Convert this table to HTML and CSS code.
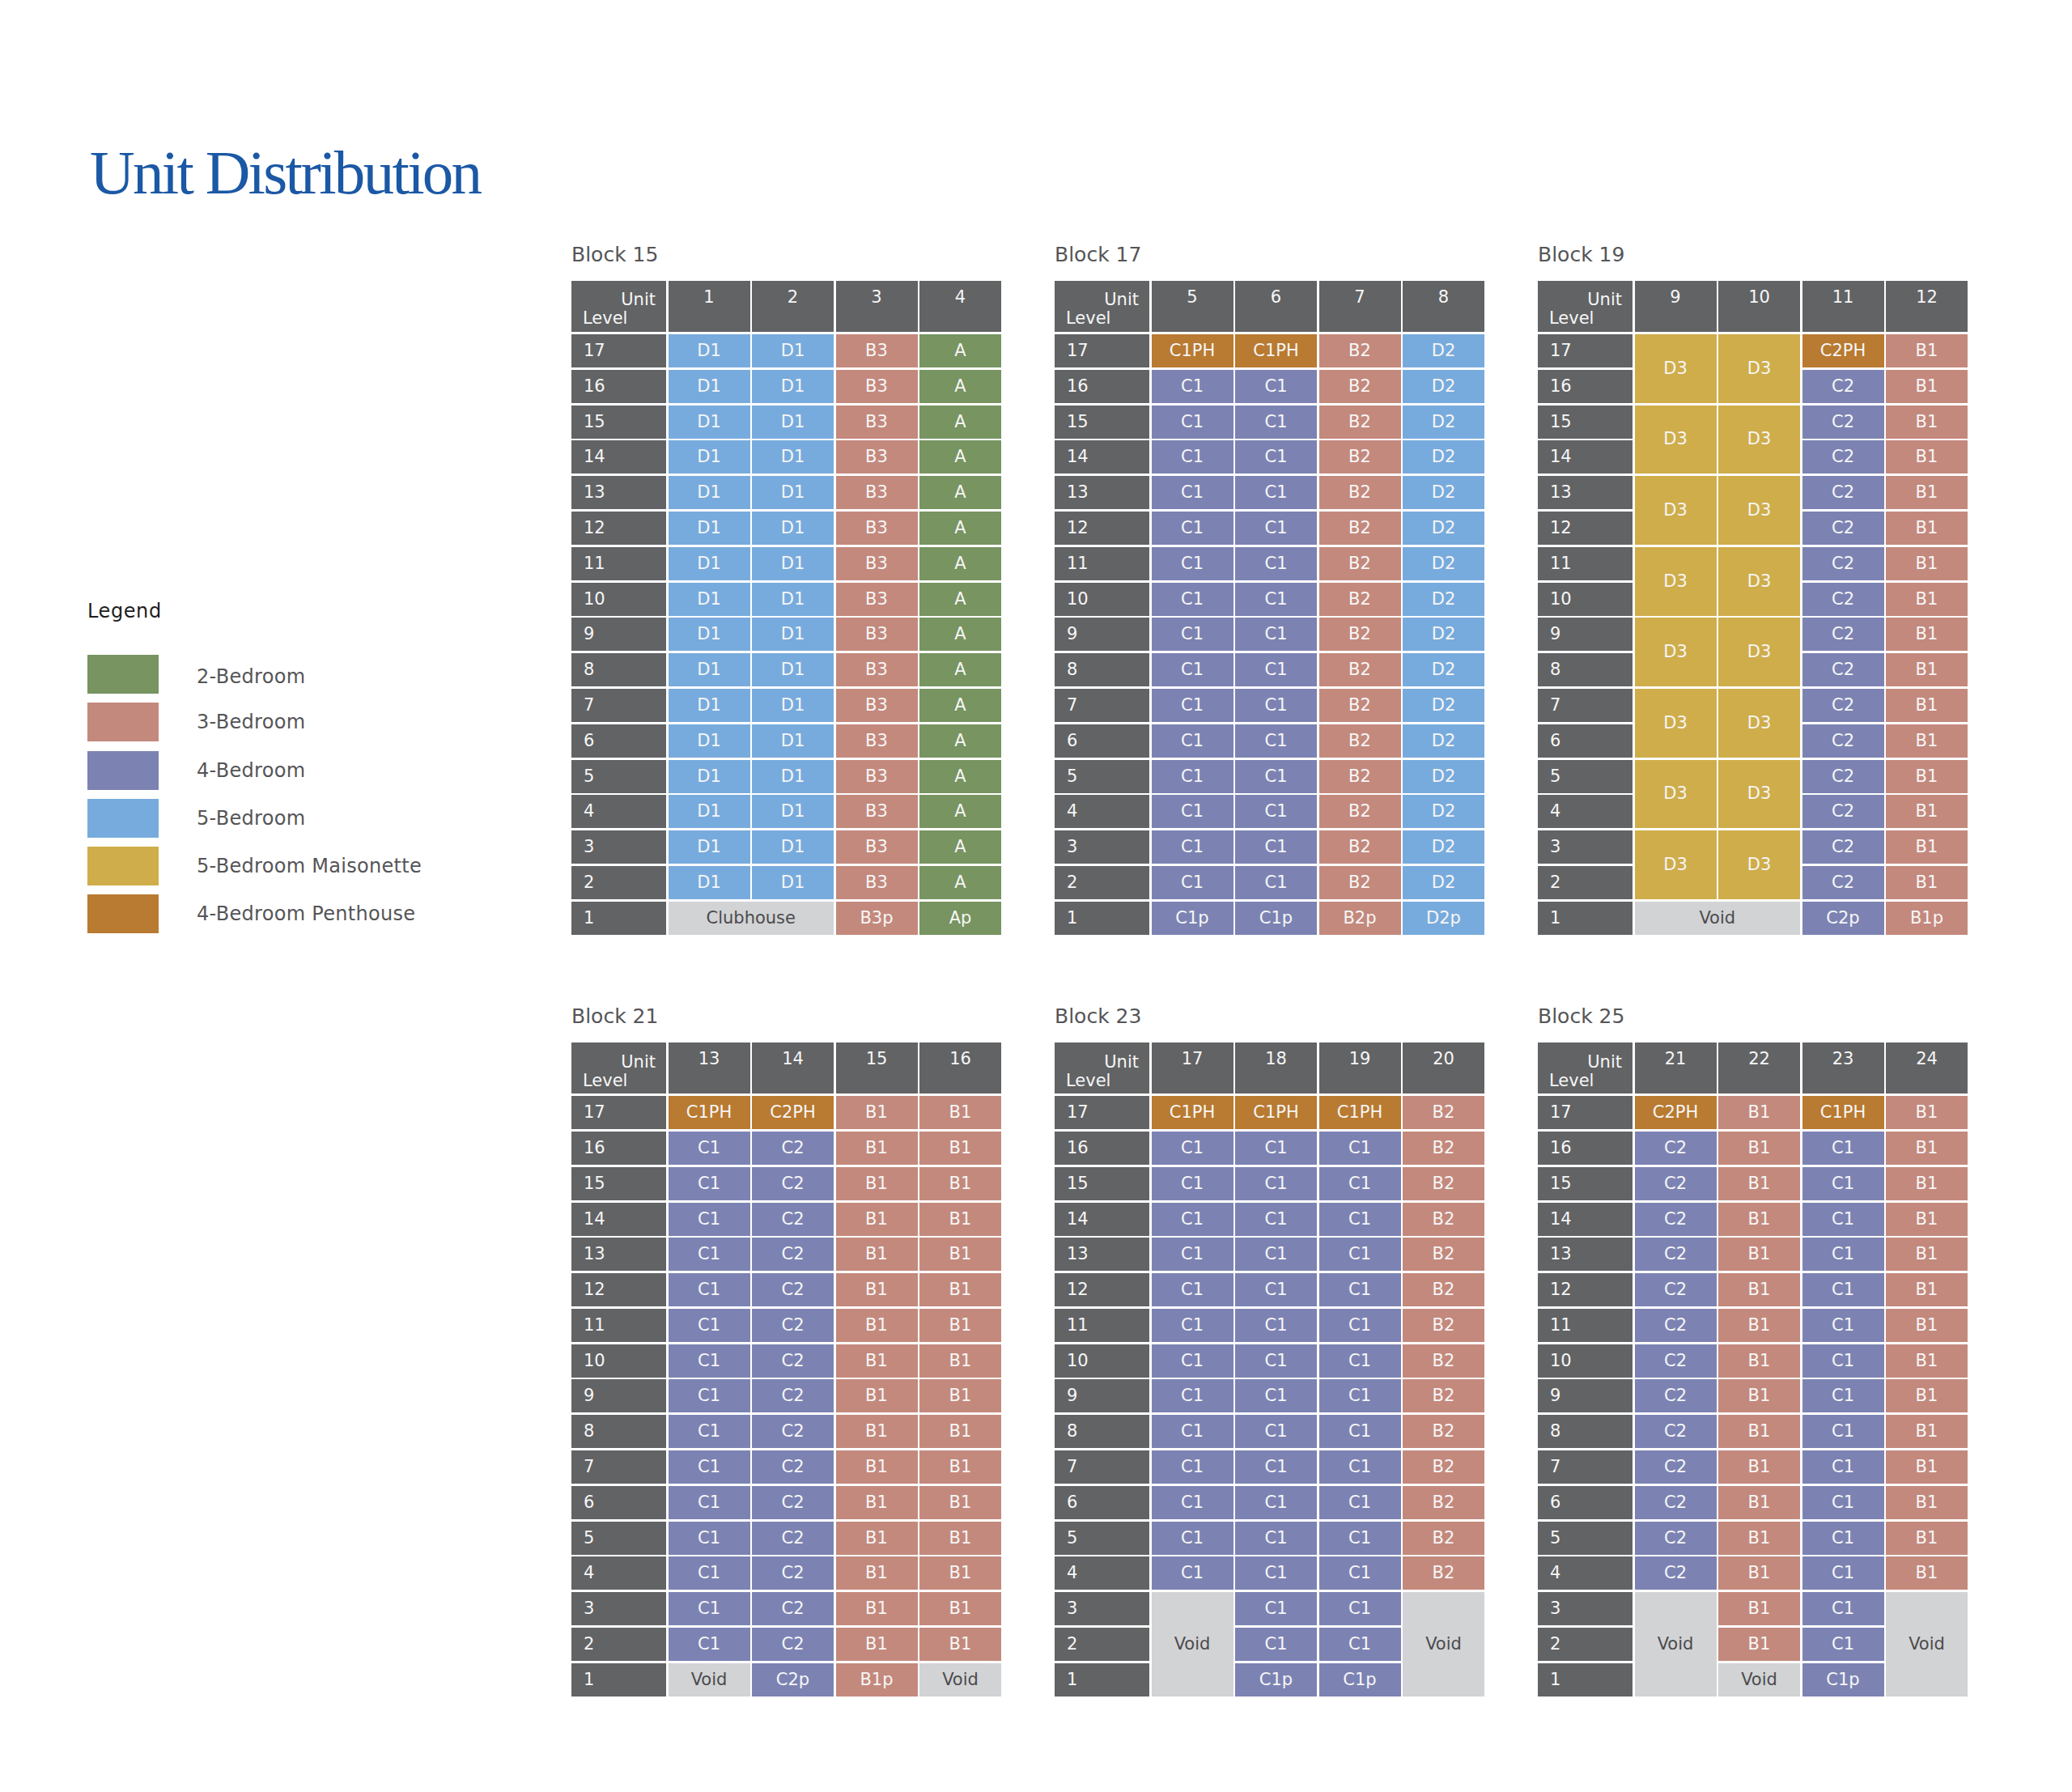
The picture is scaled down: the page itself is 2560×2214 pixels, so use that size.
FILE: index.html
```html
<!DOCTYPE html>
<html lang="en">
<head>
<meta charset="utf-8">
<title>Unit Distribution</title>
<link rel="stylesheet" href="styles.css">
</head>
<body>
<div class="page">
  <h1 class="title">Unit Distribution</h1>
  <div class="content">
    <aside class="legend">
      <div class="legend-title">Legend</div>
      <ul class="legend-list">
        <li class="legend-item"><span class="sw a"></span><span class="legend-label">2-Bedroom</span></li>
        <li class="legend-item"><span class="sw b"></span><span class="legend-label">3-Bedroom</span></li>
        <li class="legend-item"><span class="sw c"></span><span class="legend-label">4-Bedroom</span></li>
        <li class="legend-item"><span class="sw d"></span><span class="legend-label">5-Bedroom</span></li>
        <li class="legend-item"><span class="sw m"></span><span class="legend-label">5-Bedroom Maisonette</span></li>
        <li class="legend-item"><span class="sw p"></span><span class="legend-label">4-Bedroom Penthouse</span></li>
      </ul>
    </aside>

    <div class="blocks">

      <section class="block">
        <div class="block-name">Block 15</div>
        <div class="grid">
          <div class="hd corner"><span class="u">Unit</span><span class="l">Level</span></div>
          <div class="hd">1</div><div class="hd">2</div><div class="hd">3</div><div class="hd">4</div>
          <div class="lv">17</div><div class="d">D1</div><div class="d">D1</div><div class="b">B3</div><div class="a">A</div>
          <div class="lv">16</div><div class="d">D1</div><div class="d">D1</div><div class="b">B3</div><div class="a">A</div>
          <div class="lv">15</div><div class="d">D1</div><div class="d">D1</div><div class="b">B3</div><div class="a">A</div>
          <div class="lv">14</div><div class="d">D1</div><div class="d">D1</div><div class="b">B3</div><div class="a">A</div>
          <div class="lv">13</div><div class="d">D1</div><div class="d">D1</div><div class="b">B3</div><div class="a">A</div>
          <div class="lv">12</div><div class="d">D1</div><div class="d">D1</div><div class="b">B3</div><div class="a">A</div>
          <div class="lv">11</div><div class="d">D1</div><div class="d">D1</div><div class="b">B3</div><div class="a">A</div>
          <div class="lv">10</div><div class="d">D1</div><div class="d">D1</div><div class="b">B3</div><div class="a">A</div>
          <div class="lv">9</div><div class="d">D1</div><div class="d">D1</div><div class="b">B3</div><div class="a">A</div>
          <div class="lv">8</div><div class="d">D1</div><div class="d">D1</div><div class="b">B3</div><div class="a">A</div>
          <div class="lv">7</div><div class="d">D1</div><div class="d">D1</div><div class="b">B3</div><div class="a">A</div>
          <div class="lv">6</div><div class="d">D1</div><div class="d">D1</div><div class="b">B3</div><div class="a">A</div>
          <div class="lv">5</div><div class="d">D1</div><div class="d">D1</div><div class="b">B3</div><div class="a">A</div>
          <div class="lv">4</div><div class="d">D1</div><div class="d">D1</div><div class="b">B3</div><div class="a">A</div>
          <div class="lv">3</div><div class="d">D1</div><div class="d">D1</div><div class="b">B3</div><div class="a">A</div>
          <div class="lv">2</div><div class="d">D1</div><div class="d">D1</div><div class="b">B3</div><div class="a">A</div>
          <div class="lv">1</div><div class="v sc2">Clubhouse</div><div class="b">B3p</div><div class="a">Ap</div>
        </div>
      </section>

      <section class="block">
        <div class="block-name">Block 17</div>
        <div class="grid">
          <div class="hd corner"><span class="u">Unit</span><span class="l">Level</span></div>
          <div class="hd">5</div><div class="hd">6</div><div class="hd">7</div><div class="hd">8</div>
          <div class="lv">17</div><div class="p">C1PH</div><div class="p">C1PH</div><div class="b">B2</div><div class="d">D2</div>
          <div class="lv">16</div><div class="c">C1</div><div class="c">C1</div><div class="b">B2</div><div class="d">D2</div>
          <div class="lv">15</div><div class="c">C1</div><div class="c">C1</div><div class="b">B2</div><div class="d">D2</div>
          <div class="lv">14</div><div class="c">C1</div><div class="c">C1</div><div class="b">B2</div><div class="d">D2</div>
          <div class="lv">13</div><div class="c">C1</div><div class="c">C1</div><div class="b">B2</div><div class="d">D2</div>
          <div class="lv">12</div><div class="c">C1</div><div class="c">C1</div><div class="b">B2</div><div class="d">D2</div>
          <div class="lv">11</div><div class="c">C1</div><div class="c">C1</div><div class="b">B2</div><div class="d">D2</div>
          <div class="lv">10</div><div class="c">C1</div><div class="c">C1</div><div class="b">B2</div><div class="d">D2</div>
          <div class="lv">9</div><div class="c">C1</div><div class="c">C1</div><div class="b">B2</div><div class="d">D2</div>
          <div class="lv">8</div><div class="c">C1</div><div class="c">C1</div><div class="b">B2</div><div class="d">D2</div>
          <div class="lv">7</div><div class="c">C1</div><div class="c">C1</div><div class="b">B2</div><div class="d">D2</div>
          <div class="lv">6</div><div class="c">C1</div><div class="c">C1</div><div class="b">B2</div><div class="d">D2</div>
          <div class="lv">5</div><div class="c">C1</div><div class="c">C1</div><div class="b">B2</div><div class="d">D2</div>
          <div class="lv">4</div><div class="c">C1</div><div class="c">C1</div><div class="b">B2</div><div class="d">D2</div>
          <div class="lv">3</div><div class="c">C1</div><div class="c">C1</div><div class="b">B2</div><div class="d">D2</div>
          <div class="lv">2</div><div class="c">C1</div><div class="c">C1</div><div class="b">B2</div><div class="d">D2</div>
          <div class="lv">1</div><div class="c">C1p</div><div class="c">C1p</div><div class="b">B2p</div><div class="d">D2p</div>
        </div>
      </section>

      <section class="block">
        <div class="block-name">Block 19</div>
        <div class="grid">
          <div class="hd corner"><span class="u">Unit</span><span class="l">Level</span></div>
          <div class="hd">9</div><div class="hd">10</div><div class="hd">11</div><div class="hd">12</div>
          <div class="lv">17</div><div class="m sr2">D3</div><div class="m sr2">D3</div><div class="p">C2PH</div><div class="b">B1</div>
          <div class="lv">16</div><div class="c">C2</div><div class="b">B1</div>
          <div class="lv">15</div><div class="m sr2">D3</div><div class="m sr2">D3</div><div class="c">C2</div><div class="b">B1</div>
          <div class="lv">14</div><div class="c">C2</div><div class="b">B1</div>
          <div class="lv">13</div><div class="m sr2">D3</div><div class="m sr2">D3</div><div class="c">C2</div><div class="b">B1</div>
          <div class="lv">12</div><div class="c">C2</div><div class="b">B1</div>
          <div class="lv">11</div><div class="m sr2">D3</div><div class="m sr2">D3</div><div class="c">C2</div><div class="b">B1</div>
          <div class="lv">10</div><div class="c">C2</div><div class="b">B1</div>
          <div class="lv">9</div><div class="m sr2">D3</div><div class="m sr2">D3</div><div class="c">C2</div><div class="b">B1</div>
          <div class="lv">8</div><div class="c">C2</div><div class="b">B1</div>
          <div class="lv">7</div><div class="m sr2">D3</div><div class="m sr2">D3</div><div class="c">C2</div><div class="b">B1</div>
          <div class="lv">6</div><div class="c">C2</div><div class="b">B1</div>
          <div class="lv">5</div><div class="m sr2">D3</div><div class="m sr2">D3</div><div class="c">C2</div><div class="b">B1</div>
          <div class="lv">4</div><div class="c">C2</div><div class="b">B1</div>
          <div class="lv">3</div><div class="m sr2">D3</div><div class="m sr2">D3</div><div class="c">C2</div><div class="b">B1</div>
          <div class="lv">2</div><div class="c">C2</div><div class="b">B1</div>
          <div class="lv">1</div><div class="v sc2">Void</div><div class="c">C2p</div><div class="b">B1p</div>
        </div>
      </section>

      <section class="block">
        <div class="block-name">Block 21</div>
        <div class="grid">
          <div class="hd corner"><span class="u">Unit</span><span class="l">Level</span></div>
          <div class="hd">13</div><div class="hd">14</div><div class="hd">15</div><div class="hd">16</div>
          <div class="lv">17</div><div class="p">C1PH</div><div class="p">C2PH</div><div class="b">B1</div><div class="b">B1</div>
          <div class="lv">16</div><div class="c">C1</div><div class="c">C2</div><div class="b">B1</div><div class="b">B1</div>
          <div class="lv">15</div><div class="c">C1</div><div class="c">C2</div><div class="b">B1</div><div class="b">B1</div>
          <div class="lv">14</div><div class="c">C1</div><div class="c">C2</div><div class="b">B1</div><div class="b">B1</div>
          <div class="lv">13</div><div class="c">C1</div><div class="c">C2</div><div class="b">B1</div><div class="b">B1</div>
          <div class="lv">12</div><div class="c">C1</div><div class="c">C2</div><div class="b">B1</div><div class="b">B1</div>
          <div class="lv">11</div><div class="c">C1</div><div class="c">C2</div><div class="b">B1</div><div class="b">B1</div>
          <div class="lv">10</div><div class="c">C1</div><div class="c">C2</div><div class="b">B1</div><div class="b">B1</div>
          <div class="lv">9</div><div class="c">C1</div><div class="c">C2</div><div class="b">B1</div><div class="b">B1</div>
          <div class="lv">8</div><div class="c">C1</div><div class="c">C2</div><div class="b">B1</div><div class="b">B1</div>
          <div class="lv">7</div><div class="c">C1</div><div class="c">C2</div><div class="b">B1</div><div class="b">B1</div>
          <div class="lv">6</div><div class="c">C1</div><div class="c">C2</div><div class="b">B1</div><div class="b">B1</div>
          <div class="lv">5</div><div class="c">C1</div><div class="c">C2</div><div class="b">B1</div><div class="b">B1</div>
          <div class="lv">4</div><div class="c">C1</div><div class="c">C2</div><div class="b">B1</div><div class="b">B1</div>
          <div class="lv">3</div><div class="c">C1</div><div class="c">C2</div><div class="b">B1</div><div class="b">B1</div>
          <div class="lv">2</div><div class="c">C1</div><div class="c">C2</div><div class="b">B1</div><div class="b">B1</div>
          <div class="lv">1</div><div class="v">Void</div><div class="c">C2p</div><div class="b">B1p</div><div class="v">Void</div>
        </div>
      </section>

      <section class="block">
        <div class="block-name">Block 23</div>
        <div class="grid">
          <div class="hd corner"><span class="u">Unit</span><span class="l">Level</span></div>
          <div class="hd">17</div><div class="hd">18</div><div class="hd">19</div><div class="hd">20</div>
          <div class="lv">17</div><div class="p">C1PH</div><div class="p">C1PH</div><div class="p">C1PH</div><div class="b">B2</div>
          <div class="lv">16</div><div class="c">C1</div><div class="c">C1</div><div class="c">C1</div><div class="b">B2</div>
          <div class="lv">15</div><div class="c">C1</div><div class="c">C1</div><div class="c">C1</div><div class="b">B2</div>
          <div class="lv">14</div><div class="c">C1</div><div class="c">C1</div><div class="c">C1</div><div class="b">B2</div>
          <div class="lv">13</div><div class="c">C1</div><div class="c">C1</div><div class="c">C1</div><div class="b">B2</div>
          <div class="lv">12</div><div class="c">C1</div><div class="c">C1</div><div class="c">C1</div><div class="b">B2</div>
          <div class="lv">11</div><div class="c">C1</div><div class="c">C1</div><div class="c">C1</div><div class="b">B2</div>
          <div class="lv">10</div><div class="c">C1</div><div class="c">C1</div><div class="c">C1</div><div class="b">B2</div>
          <div class="lv">9</div><div class="c">C1</div><div class="c">C1</div><div class="c">C1</div><div class="b">B2</div>
          <div class="lv">8</div><div class="c">C1</div><div class="c">C1</div><div class="c">C1</div><div class="b">B2</div>
          <div class="lv">7</div><div class="c">C1</div><div class="c">C1</div><div class="c">C1</div><div class="b">B2</div>
          <div class="lv">6</div><div class="c">C1</div><div class="c">C1</div><div class="c">C1</div><div class="b">B2</div>
          <div class="lv">5</div><div class="c">C1</div><div class="c">C1</div><div class="c">C1</div><div class="b">B2</div>
          <div class="lv">4</div><div class="c">C1</div><div class="c">C1</div><div class="c">C1</div><div class="b">B2</div>
          <div class="lv">3</div><div class="v sr3">Void</div><div class="c">C1</div><div class="c">C1</div><div class="v sr3">Void</div>
          <div class="lv">2</div><div class="c">C1</div><div class="c">C1</div>
          <div class="lv">1</div><div class="c">C1p</div><div class="c">C1p</div>
        </div>
      </section>

      <section class="block">
        <div class="block-name">Block 25</div>
        <div class="grid">
          <div class="hd corner"><span class="u">Unit</span><span class="l">Level</span></div>
          <div class="hd">21</div><div class="hd">22</div><div class="hd">23</div><div class="hd">24</div>
          <div class="lv">17</div><div class="p">C2PH</div><div class="b">B1</div><div class="p">C1PH</div><div class="b">B1</div>
          <div class="lv">16</div><div class="c">C2</div><div class="b">B1</div><div class="c">C1</div><div class="b">B1</div>
          <div class="lv">15</div><div class="c">C2</div><div class="b">B1</div><div class="c">C1</div><div class="b">B1</div>
          <div class="lv">14</div><div class="c">C2</div><div class="b">B1</div><div class="c">C1</div><div class="b">B1</div>
          <div class="lv">13</div><div class="c">C2</div><div class="b">B1</div><div class="c">C1</div><div class="b">B1</div>
          <div class="lv">12</div><div class="c">C2</div><div class="b">B1</div><div class="c">C1</div><div class="b">B1</div>
          <div class="lv">11</div><div class="c">C2</div><div class="b">B1</div><div class="c">C1</div><div class="b">B1</div>
          <div class="lv">10</div><div class="c">C2</div><div class="b">B1</div><div class="c">C1</div><div class="b">B1</div>
          <div class="lv">9</div><div class="c">C2</div><div class="b">B1</div><div class="c">C1</div><div class="b">B1</div>
          <div class="lv">8</div><div class="c">C2</div><div class="b">B1</div><div class="c">C1</div><div class="b">B1</div>
          <div class="lv">7</div><div class="c">C2</div><div class="b">B1</div><div class="c">C1</div><div class="b">B1</div>
          <div class="lv">6</div><div class="c">C2</div><div class="b">B1</div><div class="c">C1</div><div class="b">B1</div>
          <div class="lv">5</div><div class="c">C2</div><div class="b">B1</div><div class="c">C1</div><div class="b">B1</div>
          <div class="lv">4</div><div class="c">C2</div><div class="b">B1</div><div class="c">C1</div><div class="b">B1</div>
          <div class="lv">3</div><div class="v sr3">Void</div><div class="b">B1</div><div class="c">C1</div><div class="v sr3">Void</div>
          <div class="lv">2</div><div class="b">B1</div><div class="c">C1</div>
          <div class="lv">1</div><div class="v">Void</div><div class="c">C1p</div>
        </div>
      </section>

    </div>
  </div>
</div>
</body>
</html>
```

FILE: styles.css
```css
html, body {
  margin: 0;
  padding: 0;
  background: #ffffff;
}

.page {
  width: 2560px;
  min-height: 2214px;
  box-sizing: border-box;
  padding: 175px 0 0 108px;
  font-family: "DejaVu Sans", "Liberation Sans", sans-serif;
}

.title {
  margin: 0 0 0 3px;
  font-family: "Liberation Serif", "DejaVu Serif", serif;
  font-weight: normal;
  font-size: 77px;
  line-height: 76px;
  letter-spacing: -2.7px;
  color: #1b58a5;
}

.content {
  display: flex;
  margin-top: 49px;
}

/* Legend */
.legend {
  width: 598px;
  flex: none;
  padding-top: 441px;
}

.legend-title {
  font-size: 24px;
  line-height: 28px;
  letter-spacing: 0.6px;
  color: #1e1e1e;
}

.legend-list {
  list-style: none;
  margin: 40px 0 0 0;
  padding: 0;
  display: flex;
  flex-direction: column;
  gap: 11.3px;
}

.legend-item {
  display: flex;
  align-items: center;
  gap: 47px;
}

.legend-item:first-child .legend-label {
  padding-top: 5px;
}

.sw {
  display: block;
  width: 88px;
  height: 48px;
}

.legend-label {
  font-size: 24px;
  line-height: 28px;
  letter-spacing: 0.3px;
  color: #555557;
}

/* Blocks */
.blocks {
  display: grid;
  grid-template-columns: repeat(3, 531px);
  column-gap: 66px;
  row-gap: 86.4px;
  align-content: start;
}

.block-name {
  font-size: 25px;
  line-height: 30px;
  color: #555557;
  margin-bottom: 16.8px;
}

.grid {
  display: grid;
  grid-template-columns: 117px repeat(4, 1fr);
  grid-template-rows: 63.4px;
  grid-auto-rows: 41px;
  column-gap: 2.5px;
  row-gap: 2.8px;
  font-size: 21px;
  color: #f6f6f6;
}

.grid > div {
  display: flex;
  align-items: center;
  justify-content: center;
  line-height: 23px;
}

.grid > .hd {
  background: #626365;
  align-items: flex-start;
  padding-top: 9px;
  box-sizing: border-box;
}

.grid > .hd.corner {
  flex-direction: column;
  align-items: stretch;
  padding: 8px 13px 0 14px;
}

.corner .u {
  text-align: right;
}

.corner .l {
  text-align: left;
}

.grid > .lv {
  background: #626365;
  justify-content: flex-start;
  padding-left: 15px;
}

.a { background: #779461; }
.b { background: #c4897d; }
.c { background: #7c83b3; }
.d { background: #78abdd; }
.m { background: #cfad4b; }
.p { background: #b97a31; }
.grid > .v {
  background: #d2d3d5;
  color: #4b4b4d;
}

.sr2 { grid-row: span 2; }
.sr3 { grid-row: span 3; }
.sc2 { grid-column: span 2; }
```
